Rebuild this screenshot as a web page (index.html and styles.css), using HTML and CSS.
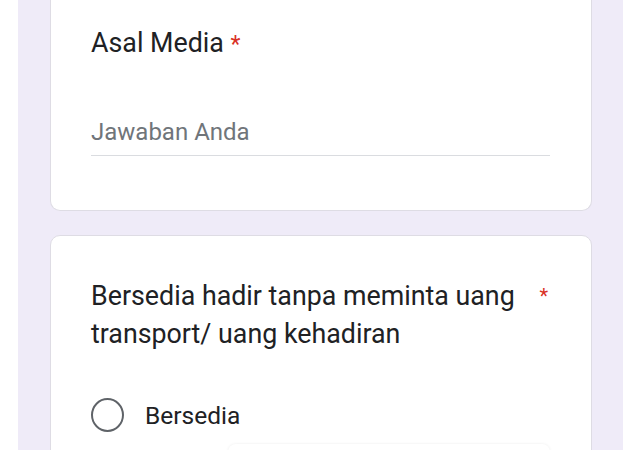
FILE: index.html
```html
<!doctype html>
<html>
<head>
  <meta charset="utf-8" />
  <meta name="viewport" content="width=device-width, initial-scale=1.0" />
  <title>Formulir</title>
  <link rel="stylesheet" href="styles.css">
</head>
<body>
  <div class="form">
    <div class="card card-first">
      <div class="question">Asal Media <span class="req">*</span></div>
      <div class="answer">Jawaban Anda</div>
    </div>

    <div class="card">
      <div class="question question-row">
        <span>Bersedia hadir tanpa meminta uang transport/ uang kehadiran</span>
        <span class="req req-small">*</span>
      </div>
      <label class="option">
        <span class="radio"></span>
        <span>Bersedia</span>
      </label>
      <div class="ghost"></div>
    </div>
  </div>
</body>
</html>
```

FILE: styles.css
```css
body {
  margin: 0;
  background: #fff;
  font-family: Roboto, "Liberation Sans", sans-serif;
  color: #202124;
  overflow: hidden;
}
.form {
  margin: 0 17px 0 18px;
  background: #efebf8;
  padding: 0 31px 0 32px;
  height: 450px;
}
.card {
  background: #fff;
  border: 1px solid #dedce4;
  border-radius: 10px;
  padding: 41px 41px 24px 40px;
  margin-bottom: 24px;
}
.card-first {
  border-top: none;
  border-radius: 0 0 10px 10px;
  padding-top: 24px;
  padding-bottom: 54px;
}
.question {
  font-size: 26.8px;
  line-height: 38px;
}
.question-row {
  display: flex;
  justify-content: space-between;
  gap: 20px;
  padding-right: 2px;
}
.req {
  color: #d93025;
  font-size: 23px;
}
.req-small {
  font-size: 20px;
}
.answer {
  margin-top: 54px;
  font-size: 24px;
  color: #70757a;
  padding-bottom: 9px;
  border-bottom: 1px solid #dadce0;
}
.option {
  display: flex;
  align-items: center;
  gap: 21px;
  margin-top: 45px;
  font-size: 24.5px;
}
.radio {
  width: 29px;
  height: 30px;
  border: 2.5px solid #5f6368;
  border-radius: 50%;
}
.ghost {
  margin: 12px 0 0 137px;
  height: 20px;
  border-radius: 8px;
  box-shadow: 0 0 3px rgba(0, 0, 0, 0.08);
}
```
